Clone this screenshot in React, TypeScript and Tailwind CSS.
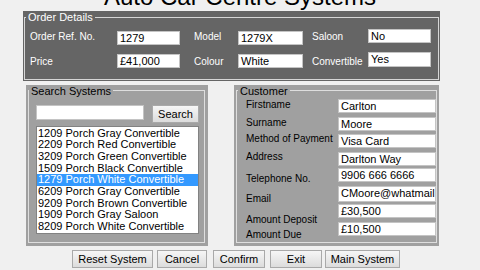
import React from "react";

const listItems = [
  "1209 Porch Gray Convertible",
  "2209 Porch Red Convertible",
  "3209 Porch Green Convertible",
  "1509 Porch Black Convertible",
  "1279 Porch White Convertible",
  "6209 Porch Gray Convertible",
  "9209 Porch Brown Convertible",
  "1909 Porch Gray Saloon",
  "8209 Porch White Convertible",
];

function Field({ value, className }: { value: string; className: string }) {
  return (
    <div
      className={`shrink-0 border border-[#c4c4c4] bg-white pl-[2px] text-[11px] leading-[12px] text-black whitespace-nowrap overflow-hidden ${className}`}
    >
      {value}
    </div>
  );
}

function Btn({ label, className }: { label: string; className: string }) {
  return (
    <div
      className={`flex h-[18px] items-center justify-center border border-[#a9a9a9] bg-linear-to-b from-[#f6f6f6] to-[#dcdcdc] text-[11px] text-black ${className}`}
    >
      {label}
    </div>
  );
}

export default function App() {
  return (
    <div className="h-[270px] w-[480px] overflow-hidden bg-[#f0f0f0] font-['Liberation_Sans',Arial,sans-serif]">
      <div className="-mt-[15px] h-[24px] text-center text-[24px] leading-[24px] text-black">
        Auto Car Centre Systems
      </div>

      {/* Order details */}
      <div className="ml-[23px] mt-[2px] h-[70px] w-[417px] bg-[#656565] px-[1px] pt-[6px]">
        <div className="h-[63px] border border-[#d6d6d6] pl-[5px]">
          <div className="-mt-[7px] -ml-[4px] h-[13px] w-fit bg-[#656565] px-[2px] text-[11px] leading-[13px] text-white">
            Order Details
          </div>
          <div className="mt-[7px] flex h-[14px] items-center text-[10px] text-white">
            <div className="mb-[4px] w-[87px]">Order Ref. No.</div>
            <Field value="1279" className="h-[14px] w-[63px]" />
            <div className="mb-[4px] ml-[14px] w-[44px]">Model</div>
            <Field value="1279X" className="h-[14px] w-[65px]" />
            <div className="mb-[4px] ml-[9px] w-[56px]">Saloon</div>
            <Field value="No" className="mb-[4px] h-[14px] w-[63px]" />
          </div>
          <div className="mt-[9px] flex h-[14px] items-center text-[10px] text-white">
            <div className="w-[87px]">Price</div>
            <Field value="£41,000" className="h-[14px] w-[63px]" />
            <div className="ml-[14px] w-[44px]">Colour</div>
            <Field value="White" className="h-[14px] w-[65px]" />
            <div className="ml-[9px] w-[56px]">Convertible</div>
            <Field value="Yes" className="mb-[3px] h-[15px] w-[63px]" />
          </div>
        </div>
      </div>

      <div className="mt-[4px] flex h-[161px]">
        {/* Search systems */}
        <div className="ml-[26px] w-[182px] bg-[#a0a0a0] pb-[3px] pl-[2px] pr-[3px] pt-[5px]">
          <div className="h-full border border-[#dedede]">
            <div className="-mt-[6px] ml-[0px] h-[12px] w-fit bg-[#a0a0a0] px-[2px] text-[11px] leading-[12px] text-black">
              Search Systems
            </div>
            <div className="ml-[7px] mt-[8px] flex">
              <div className="h-[15px] w-[108px] border border-[#c4c4c4] bg-white" />
              <Btn label="Search" className="ml-[8px] h-[15px] w-[47px]" />
            </div>
            <div className="ml-[7px] mt-[3px] h-[108px] w-[163px] border border-[#828282] bg-white py-[0.5px]">
              {listItems.map((item) => (
                <div
                  key={item}
                  className={`h-[11.7px] whitespace-nowrap pl-[1px] text-[11px] leading-[11.7px] ${
                    item.startsWith("1279") ? "bg-[#3399ff] text-white" : "text-black"
                  }`}
                >
                  {item}
                </div>
              ))}
            </div>
          </div>
        </div>

        {/* Customer */}
        <div className="ml-[26px] w-[205px] bg-[#a0a0a0] pb-[3px] pl-[2px] pr-[2px] pt-[5px]">
          <div className="h-full border border-[#dedede]">
            <div className="-mt-[6px] ml-[1px] h-[12px] w-fit bg-[#a0a0a0] px-[2px] text-[11px] leading-[12px] text-black">
              Customer
            </div>
            <div className="flex">
              <div className="ml-[9px] flex w-[93px] flex-col text-[10px] leading-[12px] text-black whitespace-nowrap">
                <div className="mt-[2px]">Firstname</div>
                <div className="mt-[6px]">Surname</div>
                <div className="mt-[4px]">Method of Payment</div>
                <div className="mt-[6px]">Address</div>
                <div className="mt-[10px]">Telephone No.</div>
                <div className="mt-[8px]">Email</div>
                <div className="mt-[9px]">Amount Deposit</div>
                <div className="mt-[3px]">Amount Due</div>
              </div>
              <div className="flex w-[98px] flex-col">
                <Field value="Carlton" className="mt-[2px] h-[14px] w-[98px]" />
                <Field value="Moore" className="mt-[4px] h-[14px] w-[98px]" />
                <Field value="Visa Card" className="mt-[3px] h-[14px] w-[98px]" />
                <Field value="Darlton Way" className="mt-[4px] h-[14px] w-[98px]" />
                <Field value="9906 666 6666" className="mt-[2px] h-[14px] w-[98px]" />
                <Field value="CMoore@whatmail" className="mt-[4px] h-[16px] w-[98px]" />
                <Field value="£30,500" className="mt-[2px] h-[14px] w-[98px]" />
                <Field value="£10,500" className="mt-[4px] h-[14px] w-[98px]" />
              </div>
            </div>
          </div>
        </div>
      </div>

      <div className="mt-[4px] flex pl-[72px]">
        <Btn label="Reset System" className="w-[81px]" />
        <Btn label="Cancel" className="ml-[4px] w-[50px]" />
        <Btn label="Confirm" className="ml-[6px] w-[52px]" />
        <Btn label="Exit" className="ml-[5px] w-[52px]" />
        <Btn label="Main System" className="ml-[3px] w-[75px]" />
      </div>
    </div>
  );
}
